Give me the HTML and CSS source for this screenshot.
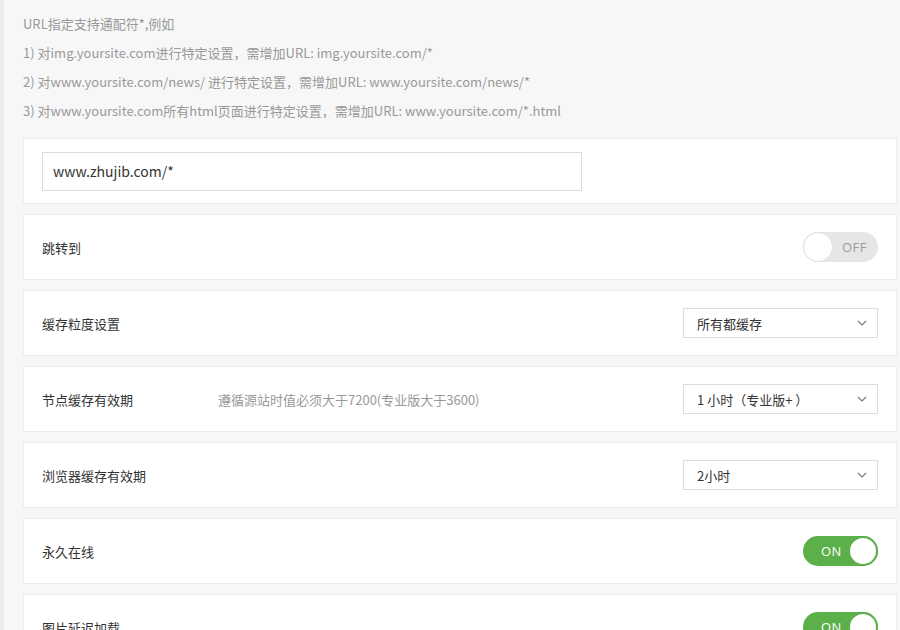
FILE: index.html
```html
<!DOCTYPE html>
<html lang="zh-CN">
<head>
<meta charset="utf-8">
<title>缓存设置</title>
<link rel="stylesheet" href="styles.css">
</head>
<body>
<div class="page">
  <div class="tips">
    <p>URL指定支持通配符*,例如</p>
    <p>1) 对img.yoursite.com进行特定设置，需增加URL: img.yoursite.com/*</p>
    <p>2) 对www.yoursite.com/news/ 进行特定设置，需增加URL: www.yoursite.com/news/*</p>
    <p>3) 对www.yoursite.com所有html页面进行特定设置，需增加URL: www.yoursite.com/*.html</p>
  </div>

  <div class="card">
    <div class="url-input">www.zhujib.com/*</div>
  </div>

  <div class="card">
    <div class="label">跳转到</div>
    <div class="toggle off"><span class="knob"></span><span class="tt">OFF</span></div>
  </div>

  <div class="card">
    <div class="label">缓存粒度设置</div>
    <div class="select"><span>所有都缓存</span><svg class="chev" viewBox="0 0 10 6" width="10" height="6"><path d="M1 1l4 4 4-4" fill="none" stroke="#777" stroke-width="1.1"/></svg></div>
  </div>

  <div class="card">
    <div class="label">节点缓存有效期</div>
    <div class="hint">遵循源站时值必须大于7200(专业版大于3600)</div>
    <div class="select"><span>1 小时（专业版+ ）</span><svg class="chev" viewBox="0 0 10 6" width="10" height="6"><path d="M1 1l4 4 4-4" fill="none" stroke="#777" stroke-width="1.1"/></svg></div>
  </div>

  <div class="card">
    <div class="label">浏览器缓存有效期</div>
    <div class="select"><span>2小时</span><svg class="chev" viewBox="0 0 10 6" width="10" height="6"><path d="M1 1l4 4 4-4" fill="none" stroke="#777" stroke-width="1.1"/></svg></div>
  </div>

  <div class="card">
    <div class="label">永久在线</div>
    <div class="toggle on"><span class="tt">ON</span><span class="knob"></span></div>
  </div>

  <div class="card">
    <div class="label">图片延迟加载</div>
    <div class="toggle on"><span class="tt">ON</span><span class="knob"></span></div>
  </div>
</div>
</body>
</html>
```

FILE: styles.css
```css
* { box-sizing: border-box; }
html, body { margin: 0; padding: 0; }
body {
  background: #f7f7f7;
  font-family: "Noto Sans CJK SC", "Open Sans", sans-serif;
  font-size: 13px;
  color: #333;
  overflow: hidden;
  height: 630px;
}
.page {
  border-left: 4px solid #ececec;
  padding: 9px 3px 0 19px;
  min-height: 630px;
}
.tips {
  color: #999;
  font-size: 13px;
  line-height: 29px;
  margin-bottom: 13px;
}
.tips p { margin: 0; }
.card {
  background: #fff;
  border: 1px solid #ececec;
  height: 66px;
  margin-bottom: 10px;
  display: flex;
  align-items: center;
  padding: 0 18px;
}
.url-input {
  width: 540px;
  height: 39px;
  border: 1px solid #dcdcdc;
  padding: 0 10px;
  display: flex;
  align-items: center;
  font-size: 14px;
  color: #333;
}
.label {
  width: 176px;
  flex: none;
  color: #333;
}
.hint {
  color: #999;
}
.select {
  margin-left: auto;
  width: 195px;
  height: 30px;
  border: 1px solid #dcdcdc;
  display: flex;
  align-items: center;
  justify-content: space-between;
  padding: 0 10px 0 13px;
  color: #333;
}
.chev { display: block; }
.toggle {
  margin-left: auto;
  width: 75px;
  height: 30px;
  border-radius: 15px;
  display: flex;
  align-items: center;
  font-family: "Open Sans", "Liberation Sans", sans-serif;
  font-size: 13px;
  letter-spacing: 0.5px;
}
.toggle .knob {
  width: 30px;
  height: 30px;
  border-radius: 50%;
  background: #fff;
  flex: none;
}
.toggle.off {
  background: #e6e6e6;
  color: #999;
}
.toggle.off .knob {
  border: 1px solid #e0e0e0;
}
.toggle.off .tt { margin-left: 9px; }
.toggle.on {
  background: #5cb04a;
  color: #fff;
  justify-content: space-between;
  padding-left: 18px;
}
.toggle.on .knob {
  border: 2px solid #5cb04a;
}
```
